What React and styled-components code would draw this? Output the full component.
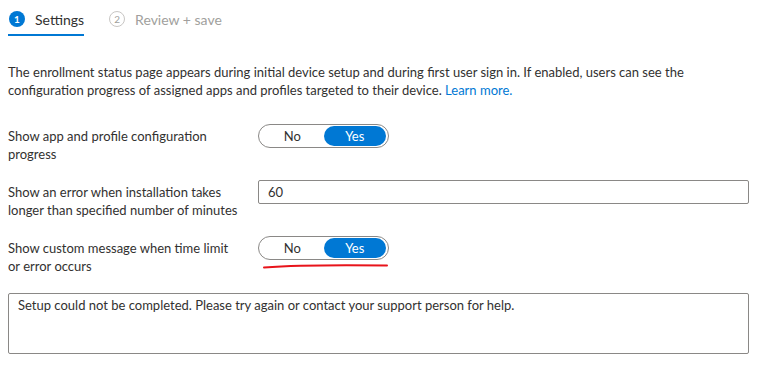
import styled, { createGlobalStyle } from "styled-components";

const GlobalStyle = createGlobalStyle`
  body {
    margin: 0;
    background: #ffffff;
    font-family: "Segoe UI", "Lato", "Open Sans", sans-serif;
    color: #323130;
  }
`;

const Page = styled.div`
  width: 766px;
  height: 367px;
  padding: 0 17px 0 8px;
  box-sizing: border-box;
  overflow: hidden;
`;

const Tabs = styled.div`
  display: flex;
  gap: 24px;
  height: 36px;
  align-items: stretch;
`;

const Tab = styled.div`
  display: flex;
  align-items: center;
  gap: 10px;
  padding: 4px 0 0 1px;
  font-size: 14px;
  color: ${(p) => (p.active ? "#323130" : "#a19f9d")};
  border-bottom: 2px solid ${(p) => (p.active ? "#0078d4" : "transparent")};
  box-sizing: border-box;
`;

const Step = styled.span`
  width: 16px;
  height: 16px;
  border-radius: 50%;
  box-sizing: border-box;
  display: inline-flex;
  align-items: center;
  justify-content: center;
  font-size: 10px;
  font-weight: ${(p) => (p.active ? 700 : 400)};
  background: ${(p) => (p.active ? "#0078d4" : "transparent")};
  color: ${(p) => (p.active ? "#ffffff" : "#a19f9d")};
  border: ${(p) => (p.active ? "none" : "1px solid #c8c6c4")};
`;

const Intro = styled.p`
  margin: 27px 0 25px;
  font-size: 13px;
  line-height: 18px;
`;

const Link = styled.a`
  color: #0078d4;
  text-decoration: none;
`;

const Rows = styled.div`
  display: flex;
  flex-direction: column;
  gap: 17px;
`;

const Row = styled.div`
  display: grid;
  grid-template-columns: 232px 1fr;
  column-gap: 18px;
  align-items: start;
  position: relative;
`;

const Label = styled.div`
  font-size: 13px;
  line-height: 18px;
  padding-top: 3px;
  min-height: 36px;
`;

const Toggle = styled.div`
  width: 131px;
  height: 24px;
  box-sizing: border-box;
  border: 1px solid #8a8886;
  border-radius: 12px;
  padding: 1px 2px;
  display: grid;
  grid-template-columns: 1fr 1fr;
`;

const Option = styled.span`
  display: flex;
  align-items: center;
  justify-content: center;
  border-radius: 10px;
  font-size: 13px;
  background: ${(p) => (p.on ? "#0078d4" : "transparent")};
  color: ${(p) => (p.on ? "#ffffff" : "#323130")};
`;

const Input = styled.div`
  height: 24px;
  box-sizing: border-box;
  border: 1px solid #8a8886;
  border-radius: 2px;
  padding: 0 9px;
  display: flex;
  align-items: center;
  font-size: 13px;
`;

const TextArea = styled.div`
  margin-top: 18px;
  height: 61px;
  box-sizing: border-box;
  border: 1px solid #8a8886;
  border-radius: 2px;
  padding: 2px 9px;
  font-size: 13px;
  line-height: 18px;
`;

const Scribble = styled.svg`
  position: absolute;
  left: 255px;
  top: 26px;
  overflow: visible;
`;

const YesNo = () => (
  <Toggle>
    <Option>No</Option>
    <Option on>Yes</Option>
  </Toggle>
);

export default function App() {
  return (
    <Page>
      <GlobalStyle />
      <Tabs>
        <Tab active>
          <Step active>1</Step>
          Settings
        </Tab>
        <Tab>
          <Step>2</Step>
          Review + save
        </Tab>
      </Tabs>
      <Intro>
        The enrollment status page appears during initial device setup and during first user sign in. If enabled, users can see the
        configuration progress of assigned apps and profiles targeted to their device. <Link href="#">Learn more.</Link>
      </Intro>
      <Rows>
        <Row>
          <Label>Show app and profile configuration progress</Label>
          <YesNo />
        </Row>
        <Row>
          <Label>Show an error when installation takes longer than specified number of minutes</Label>
          <Input>60</Input>
        </Row>
        <Row>
          <Label>Show custom message when time limit or error occurs</Label>
          <YesNo />
          <Scribble width="125" height="8" viewBox="0 0 125 8">
            <path d="M1 5.5 C 30 3.5, 70 2.8, 124 3.6" stroke="#e8141b" strokeWidth="2" fill="none" strokeLinecap="round" />
          </Scribble>
        </Row>
      </Rows>
      <TextArea>Setup could not be completed. Please try again or contact your support person for help.</TextArea>
    </Page>
  );
}
